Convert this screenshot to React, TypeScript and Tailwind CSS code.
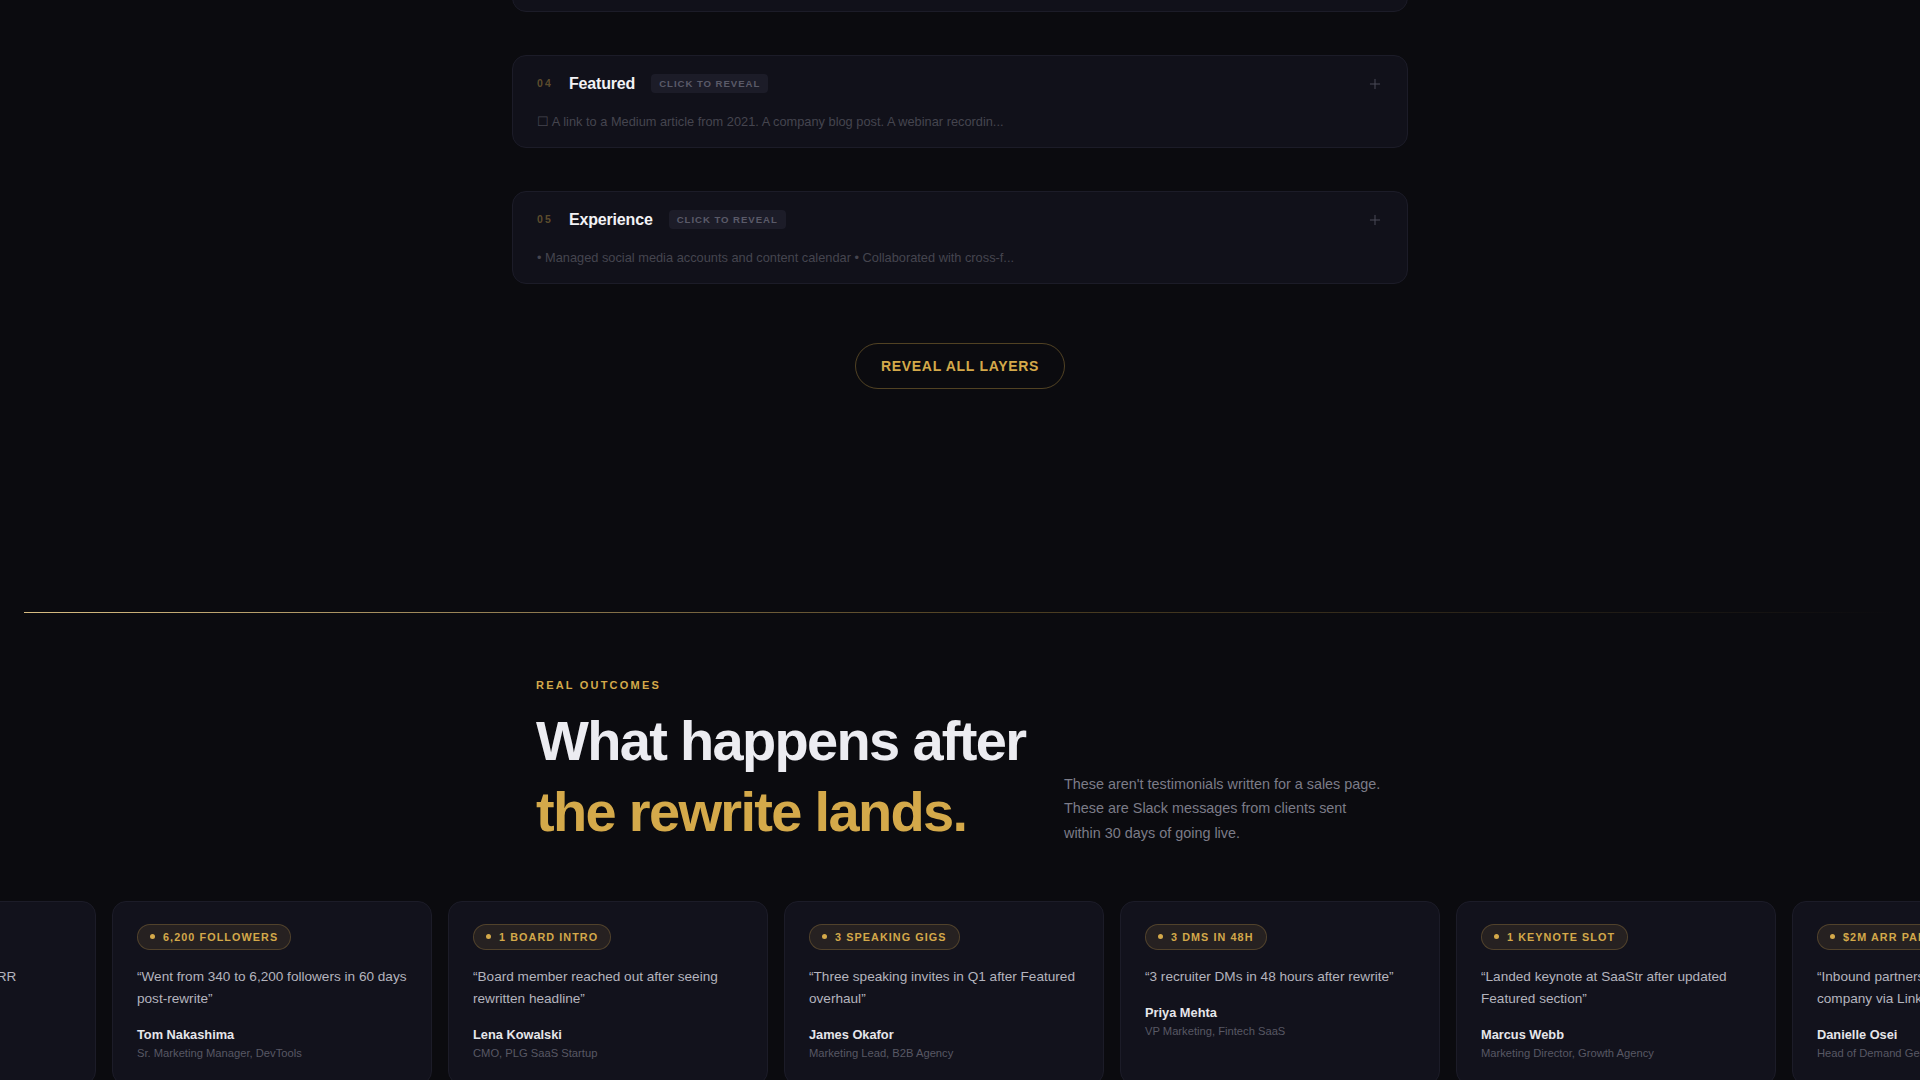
import { Plus } from "lucide-react";

const layers = [
  {
    num: "03",
    title: "About",
    preview: "I am a results-driven marketing professional with over 8 years of experience in...",
  },
  {
    num: "04",
    title: "Featured",
    preview: "☐ A link to a Medium article from 2021. A company blog post. A webinar recordin...",
  },
  {
    num: "05",
    title: "Experience",
    preview: "• Managed social media accounts and content calendar • Collaborated with cross-f...",
  },
];

const danielle = {
  badge: "$2M ARR PARTNERSHIP",
  quote: "“Inbound partnership with $2M ARR company via LinkedIn post”",
  name: "Danielle Osei",
  role: "Head of Demand Gen, Enterprise SaaS",
};

const tom = {
  badge: "6,200 FOLLOWERS",
  quote: "“Went from 340 to 6,200 followers in 60 days post-rewrite”",
  name: "Tom Nakashima",
  role: "Sr. Marketing Manager, DevTools",
};

const outcomes = [
  danielle,
  tom,
  {
    badge: "1 BOARD INTRO",
    quote: "“Board member reached out after seeing rewritten headline”",
    name: "Lena Kowalski",
    role: "CMO, PLG SaaS Startup",
  },
  {
    badge: "3 SPEAKING GIGS",
    quote: "“Three speaking invites in Q1 after Featured overhaul”",
    name: "James Okafor",
    role: "Marketing Lead, B2B Agency",
  },
  {
    badge: "3 DMS IN 48H",
    quote: "“3 recruiter DMs in 48 hours after rewrite”",
    name: "Priya Mehta",
    role: "VP Marketing, Fintech SaaS",
  },
  {
    badge: "1 KEYNOTE SLOT",
    quote: "“Landed keynote at SaaStr after updated Featured section”",
    name: "Marcus Webb",
    role: "Marketing Director, Growth Agency",
  },
  danielle,
  tom,
];

const LayerCard = ({ num, title, preview }: { num: string; title: string; preview: string }) => (
  <div className="rounded-[14px] border border-[#1c1c28] bg-[#11111a] px-6 pt-[18px] pb-[15px]">
    <div className="flex h-[19px] items-center justify-between">
      <div className="flex items-center gap-4">
        <span className="text-[10.5px] font-bold tracking-[0.2em] text-[#d4a94a]/40">{num}</span>
        <span className="text-[16px] leading-5 font-semibold tracking-[-0.01em] text-[#f2f2f5]">{title}</span>
        <span className="rounded-[4px] bg-[#1c1c28] px-2 py-[3px] text-[9.6px] leading-[13px] font-bold tracking-[0.1em] text-[#5a5a68]">
          CLICK TO REVEAL
        </span>
      </div>
      <Plus size={16} strokeWidth={1.5} className="text-[#4a4a56]" />
    </div>
    <p className="mt-[19px] truncate text-[12.8px] leading-5 text-[#45454f]">{preview}</p>
  </div>
);

export default function App() {
  return (
    <div className="h-[1080px] overflow-hidden bg-[#0b0b0f] font-['Liberation_Sans',Arial,sans-serif]">
      {/* Layers */}
      <div className="mx-auto mt-[-81px] w-[896px]">
        <div className="flex flex-col gap-[43px]">
          {layers.map((l) => (
            <LayerCard key={l.num} {...l} />
          ))}
        </div>
        <div className="mt-[59px] flex justify-center">
          <button className="rounded-full border border-[#d4a94a]/35 px-[25px] py-3 text-[14px] leading-5 font-bold tracking-[0.05em] text-[#d4a94a]">
            REVEAL ALL LAYERS
          </button>
        </div>
      </div>

      {/* Divider */}
      <div className="mx-6 mt-[223px] h-px bg-gradient-to-r from-[#d8bd82] via-[#d4a94a]/35 to-transparent" />

      {/* Outcomes */}
      <div className="mx-auto w-[896px] px-6 pt-16">
        <p className="text-[11px] leading-4 font-bold tracking-[0.2em] text-[#d4a94a]">REAL OUTCOMES</p>
        <div className="mt-[12px] flex items-end justify-between">
          <h2 className="text-[56px] leading-[1.27] font-bold tracking-[-0.03em] text-[#ececf1]">
            What happens after
            <br />
            <span className="text-[#d4a94a]">the rewrite lands.</span>
          </h2>
          <p className="mb-[2px] w-[320px] text-[14.4px] leading-[1.7] text-[#7c7c88]">
            These aren't testimonials written for a sales page. These are Slack messages from clients sent within 30 days of going live.
          </p>
        </div>
      </div>

      <div className="mt-[54px] ml-[-224px] flex gap-4">
        {outcomes.map((o, i) => (
          <div
            key={i}
            className="w-[320px] shrink-0 rounded-[14px] border border-[#1c1c28] bg-[#12121c] px-6 pt-5 pb-6"
          >
            <span className="inline-flex h-[26px] items-center gap-2 rounded-full border border-[#d4a94a]/25 bg-[#d4a94a]/10 px-3 text-[10.8px] font-bold tracking-[0.1em] text-[#d4a94a]">
              <span className="h-[5px] w-[5px] rounded-full bg-[#d4a94a]" />
              {o.badge}
            </span>
            <p className="mt-4 text-[13.6px] leading-[22px] text-[#b4b4be]">{o.quote}</p>
            <p className="mt-4 text-[12.8px] leading-[18px] font-bold text-[#e6e6ea]">{o.name}</p>
            <p className="mt-0.5 text-[11.2px] leading-[14px] text-[#585864]">{o.role}</p>
          </div>
        ))}
      </div>
    </div>
  );
}
